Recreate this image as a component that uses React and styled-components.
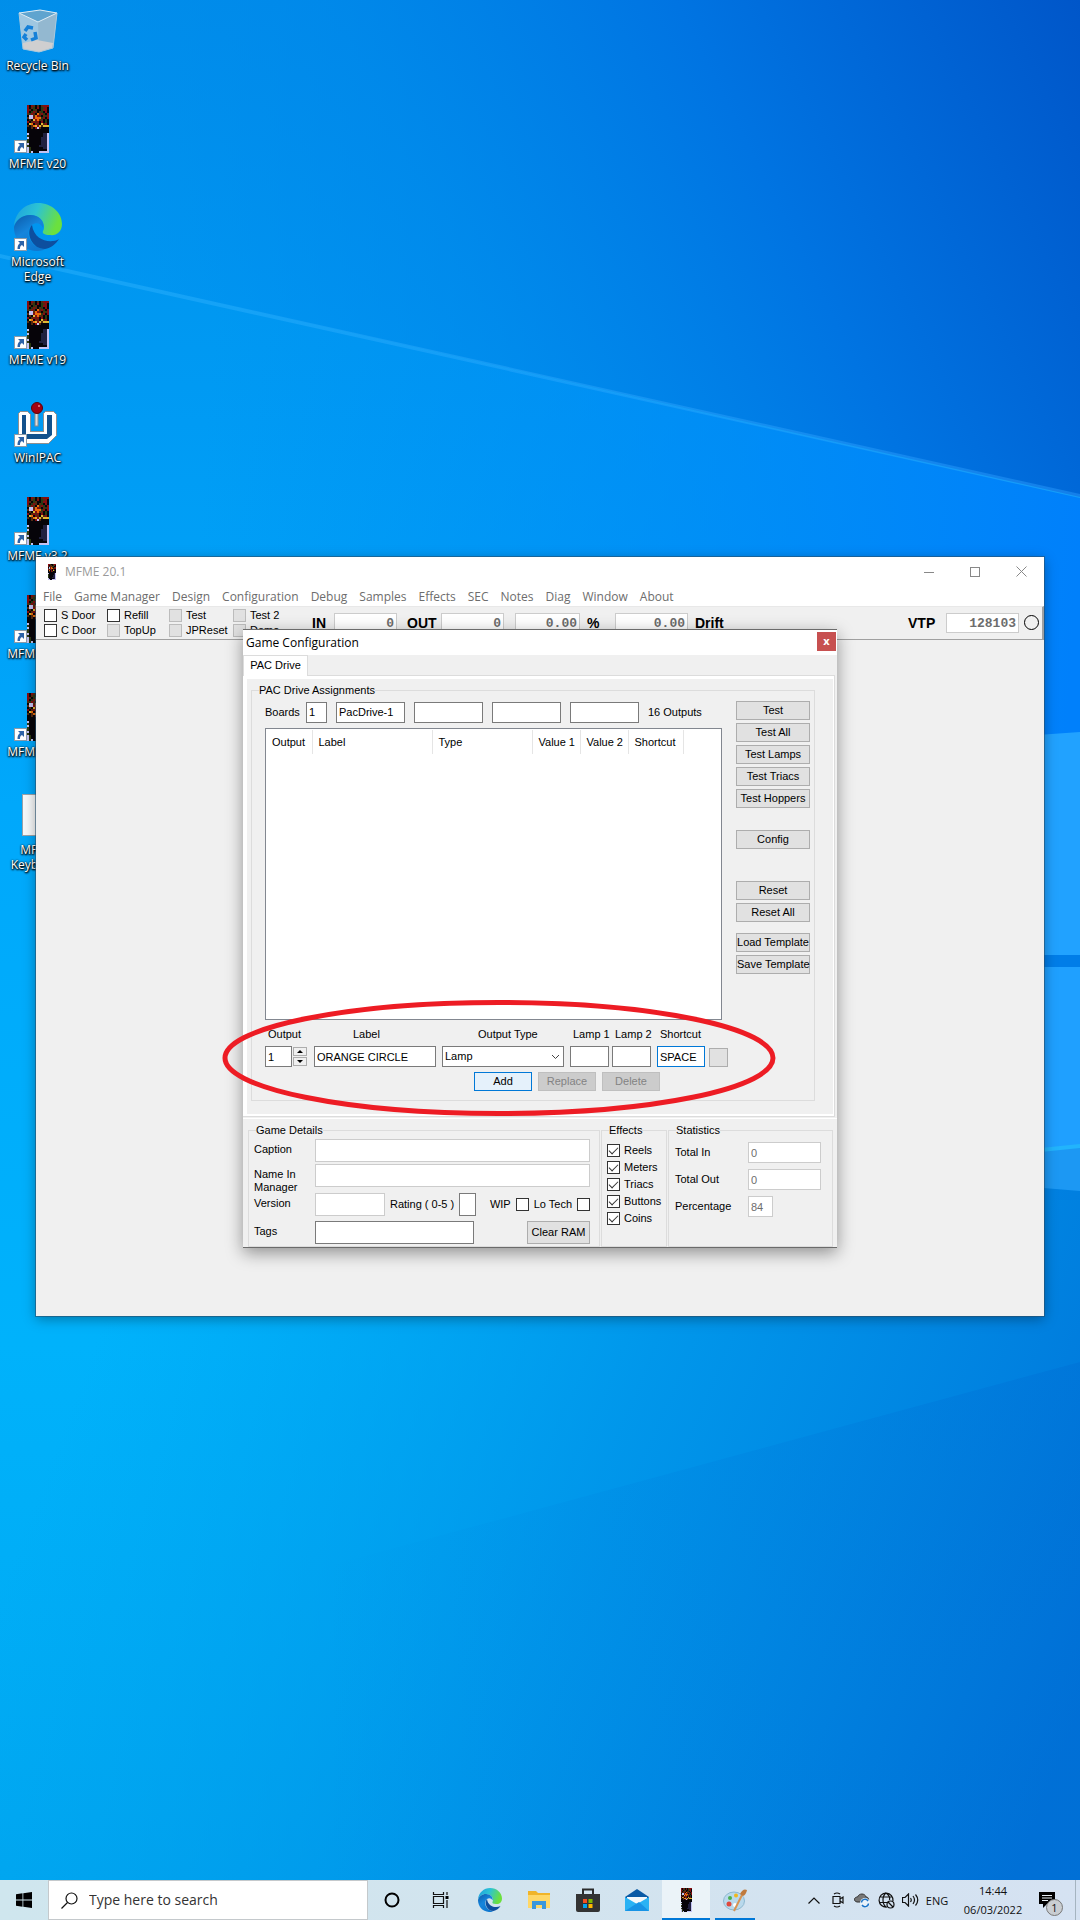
import React from 'react';
import styled, { createGlobalStyle, css } from 'styled-components';

const SHELL = '"Open Sans", "Noto Sans", sans-serif';
const CLASSIC = '"Liberation Sans", Arial, sans-serif';

const GlobalStyle = createGlobalStyle`
  *, *::before, *::after { box-sizing: border-box; }
  body { margin: 0; background: #0092ea; }
  button, input, select { font: inherit; color: inherit; margin: 0; border-radius: 0; }
`;

/* ---------- Desktop ---------- */

const Desktop = styled.main`
  position: relative;
  display: flex;
  flex-direction: column;
  min-height: 100vh;
  overflow: hidden;
  font: 12px/15px ${SHELL};
`;

const WallpaperArt = styled.svg`
  position: absolute;
  inset: 0;
  width: 100%;
  height: 100%;
`;

const IconColumn = styled.ul`
  position: relative;
  flex: 1;
  display: grid;
  grid-auto-rows: 98px;
  align-content: start;
  width: 75px;
  margin: 0;
  padding: 7px 0 0;
  list-style: none;
`;

const Shortcut = styled.a`
  display: flex;
  flex-direction: column;
  align-items: center;
  gap: 3px;
  color: #fff;
  text-align: center;
  text-decoration: none;
  text-shadow: 0 1px 2px #000, 1px 1px 2px #000, 0 0 2px rgba(0, 0, 0, 0.8);

  span { width: 68px; }
  svg { display: block; }
`;

/* ---------- Shared controls ---------- */

const PushButton = styled.button`
  width: ${(p) => p.$width || 74}px;
  height: ${(p) => p.$height || 19}px;
  padding: 0;
  border: 1px solid #adadad;
  background: #e1e1e1;
  line-height: 13px;
  white-space: nowrap;

  ${(p) => p.$primary && css`
    border-color: #0078d7;
    background: #e5f1fb;
  `}
  &:disabled {
    border-color: #bfbfbf;
    background: #cccccc;
    color: #838383;
  }
`;

const TextBox = styled.input`
  width: ${(p) => (p.$width ? `${p.$width}px` : '100%')};
  height: ${(p) => p.$height || 21}px;
  min-width: 0;
  padding: 0 2px;
  border: 1px solid ${(p) => (p.$active ? '#0078d7' : p.$soft ? '#cccccc' : '#7a7a7a')};
  background: #fff;
  color: ${(p) => (p.$dim ? '#6d6d6d' : '#000')};
  outline: none;
`;

const Tick = styled.input`
  appearance: none;
  flex: none;
  display: grid;
  place-items: center;
  width: 13px;
  height: 13px;
  border: 1px solid #333;
  background: #fff;

  &:disabled { border-color: #bcbcbc; background: #e1e1e1; }
  &:checked::before {
    content: '';
    width: 9px;
    height: 5px;
    margin-bottom: 3px;
    border: solid #333;
    border-width: 0 0 1px 1px;
    transform: rotate(-45deg);
  }
`;

const TickLabel = styled.label`
  display: flex;
  align-items: center;
  gap: 4px;
  height: 13px;
  white-space: nowrap;
`;

/* ---------- Main window ---------- */

const AppWindow = styled.section`
  position: absolute;
  top: 557px;
  left: 36px;
  right: 36px;
  height: 759px;
  background: #f0f0f0;
  box-shadow: 0 0 0 1px rgba(40, 80, 110, 0.6), 0 3px 12px rgba(0, 0, 0, 0.35);
`;

const AppTitle = styled.header`
  display: flex;
  align-items: center;
  height: 29px;
  padding-left: 12px;
  background: #fff;
  color: #999;

  h1 { flex: 1; margin: 0 0 0 9px; font-size: 12px; font-weight: 400; }
`;

const CaptionButton = styled.button`
  display: grid;
  place-items: center;
  width: 46px;
  height: 29px;
  padding: 0;
  border: 0;
  background: transparent;
`;

const MenuBar = styled.nav`
  display: flex;
  height: 20px;
  padding-left: 1px;
  background: #fff;
  color: #6d6d6d;

  a { padding: 0 6px; color: inherit; text-decoration: none; line-height: 22px; }
`;

const ToolBar = styled.div`
  display: flex;
  height: 34px;
  padding: 2px 1px 0 8px;
  border-top: 1px solid #e8e8e8;
  border-right: 2px solid #a0a0a0;
  border-bottom: 1px solid #a0a0a0;
  font: 11px/13px ${CLASSIC};
`;

const SwitchGrid = styled.div`
  display: grid;
  grid-template-columns: 63px 62px 64px 79px;
  grid-auto-rows: 13px;
  row-gap: 2px;
`;

const Meter = styled.label`
  display: flex;
  align-items: center;
  height: 28px;
  margin-left: ${(p) => p.$lead || 0}px;
  font: bold 14px/16px ${CLASSIC};

  span { width: ${(p) => p.$label || 0}px; }
`;

const Digits = styled.input`
  width: ${(p) => p.$width}px;
  height: 20px;
  padding: 1px 2px 0;
  border: 1px solid #ccc;
  background: #fff;
  color: #6d6d6d;
  font: bold 13px/16px "Liberation Mono", monospace;
  text-align: right;
`;

const StatusLamp = styled.span`
  align-self: center;
  width: 15px;
  height: 15px;
  margin: 0 2px 3px 5px;
  border: 1px solid #000;
  border-radius: 50%;
`;

const Spacer = styled.div`
  flex: 1;
`;

/* ---------- Configuration dialog ---------- */

const Dialog = styled.section`
  position: absolute;
  top: 72px;
  left: 207px;
  width: 594px;
  border: solid #6b6b6b;
  border-width: 1px 0;
  background: #f0f0f0;
  box-shadow: 0 5px 16px rgba(0, 0, 0, 0.4);
  color: #000;
  font: 11px/13px ${CLASSIC};
`;

const DialogTitle = styled.header`
  display: flex;
  align-items: center;
  justify-content: space-between;
  height: 25px;
  padding: 0 1px 0 3px;
  background: #fff;

  h2 { margin: 0; font: 400 12px/16px ${SHELL}; }
`;

const CloseButton = styled.button`
  width: 19px;
  height: 19px;
  margin-bottom: 2px;
  padding: 0 0 2px;
  border: 0;
  background: #c75050;
  color: #fff;
  font: bold 11px/13px ${SHELL};
`;

const TabStrip = styled.div`
  display: flex;
  height: 20px;
`;

const Tab = styled.button`
  position: relative;
  width: 65px;
  height: 21px;
  padding: 0 0 2px;
  border: solid #dcdcdc;
  border-width: 1px 1px 0;
  background: #fff;
  white-space: nowrap;
`;

const TabPanel = styled.div`
  margin-right: 2px;
  padding: 3px 1px 2px 4px;
  border: solid #dcdcdc;
  border-width: 1px 1px 1px 0;
  background: #fff;
`;

const TabBody = styled.div`
  padding: 5px 18px 13px 4px;
  background: #f0f0f0;
`;

const Group = styled.fieldset`
  min-width: 0;
  margin: 0;
  padding: 0;
  border: 1px solid #dcdcdc;

  legend { margin-left: 7px; padding: 0; line-height: 13px; }
`;

const DriveLayout = styled.div`
  display: grid;
  grid-template-columns: minmax(0, 1fr) 74px;
  column-gap: 14px;
  padding: 4px 4px 9px 13px;
`;

const BoardsRow = styled.div`
  display: grid;
  grid-template-columns: 32px 21px repeat(4, 69px) 1fr;
  align-items: center;
  column-gap: 9px;
  height: 22px;
  white-space: nowrap;
`;

const ListBox = styled.div`
  height: 292px;
  margin-top: 5px;
  padding-top: 1px;
  border: 1px solid #828790;
  background: #fff;
`;

const ListTable = styled.table`
  table-layout: fixed;
  width: 417px;
  border-collapse: collapse;

  th {
    height: 24px;
    padding: 0 0 0 6px;
    border-right: 1px solid #e5e5e5;
    font-weight: 400;
    text-align: left;
    white-space: nowrap;
  }
`;

const EntryRow = styled.div`
  display: flex;
  align-items: flex-end;
  gap: 6px;
  margin-top: 8px;
`;

const EntryPair = styled.div`
  flex: none;
  display: flex;
  align-items: flex-end;
  gap: ${(p) => p.$gap || 3}px;
`;

const Entry = styled.div`
  flex: none;
  width: ${(p) => p.$width}px;

  > label {
    display: block;
    margin-bottom: 5px;
    padding-left: ${(p) => p.$indent || 3}px;
    white-space: nowrap;
  }
`;

const Spin = styled.div`
  display: flex;
  gap: 1px;
`;

const SpinArrows = styled.div`
  display: grid;
  grid-template-rows: 9px 9px;
  gap: 1px;
  padding-top: 1px;

  button {
    display: grid;
    place-items: center;
    width: 14px;
    padding: 0;
    border: 1px solid #adadad;
    background: #f0f0f0;
  }
`;

const SelectWrap = styled.div`
  display: grid;
  align-items: center;

  > * { grid-area: 1 / 1; }
  svg { justify-self: end; margin-right: 4px; pointer-events: none; }
`;

const DropDown = styled.select`
  appearance: none;
  width: 100%;
  height: 21px;
  padding: 0 2px;
  border: 1px solid #7a7a7a;
  background: #fff;
`;

const ActionRow = styled.div`
  display: flex;
  gap: 6px;
  margin-top: 5px;
  padding-left: 209px;
`;

const ButtonStack = styled.div`
  display: flex;
  flex-direction: column;
  gap: 3px;
  margin-bottom: ${(p) => p.$after || 0}px;
`;

const BottomRow = styled.div`
  display: grid;
  grid-template-columns: 352px 66px 165px;
  column-gap: 1px;
  margin-top: 1px;
  padding: 5px 3px 0 5px;
  border-top: 1px solid #fff;
`;

const Details = styled.div`
  padding: 2px 9px 2px 5px;
`;

const DetailRow = styled.div`
  display: flex;
  height: 23px;
  margin-bottom: ${(p) => p.$after || 0}px;
`;

const DetailLabel = styled.label`
  flex: none;
  width: 61px;
  padding-top: 4px;
`;

const Inline = styled.div`
  display: flex;
  align-items: center;
  gap: 5px;
  white-space: nowrap;
`;

const EffectList = styled.div`
  display: grid;
  gap: 4px;
  padding: 7px 0 0 5px;
`;

const Stats = styled.div`
  display: grid;
  grid-template-columns: 73px 1fr;
  align-items: center;
  row-gap: 6px;
  padding: 5px 11px 0 6px;
`;

const Highlight = styled.svg`
  position: absolute;
  top: 369px;
  left: -21px;
  width: 554px;
  height: 118px;
  pointer-events: none;
`;

/* ---------- Taskbar ---------- */

const TaskBar = styled.footer`
  position: relative;
  display: flex;
  align-items: stretch;
  height: 40px;
  background: linear-gradient(90deg, #cfe6ee, #d2e4ee 45%, #d5e2f2);
  color: #111;
`;

const TaskButton = styled.button`
  display: grid;
  place-items: center;
  width: ${(p) => p.$width || 49}px;
  margin-left: ${(p) => p.$lead || 0}px;
  padding: 0;
  border: 0;
  background: ${(p) => (p.$current ? '#ebf3f8' : 'transparent')};
  box-shadow: ${(p) => (p.$running ? 'inset 0 -2px #0078d7' : 'none')};
`;

const SearchBox = styled.label`
  display: flex;
  align-items: center;
  gap: 11px;
  width: 320px;
  padding: 0 12px;
  border: 1px solid #c4c9cc;
  background: #fff;

  input {
    flex: 1;
    min-width: 0;
    padding: 0;
    border: 0;
    background: none;
    outline: none;
    font-size: 14px;
    line-height: 20px;
  }
  input::placeholder { color: #333; opacity: 1; }
`;

const Tray = styled.div`
  display: flex;
  align-items: center;
  margin-left: auto;
`;

const TrayButton = styled(TaskButton)`
  width: 24px;
  height: 40px;
`;

const Language = styled.span`
  width: 30px;
  text-align: center;
  font-size: 11px;
`;

const Clock = styled.time`
  display: grid;
  width: 82px;
  text-align: center;
  font-size: 11px;
  line-height: 19px;
`;

const ActionCentre = styled.button`
  display: grid;
  align-items: center;
  width: 42px;
  height: 40px;
  padding: 0 0 0 5px;
  border: 0;
  border-right: 1px solid #a5b4c0;
  margin-right: 4px;
  background: transparent;
`;

const NoticeIcon = styled.span`
  position: relative;
  display: block;
  svg { display: block; }
`;

const Badge = styled.span`
  position: absolute;
  top: 7px;
  left: 7px;
  width: 17px;
  height: 17px;
  border: 1px solid #777;
  border-radius: 50%;
  background: #c9cdd1;
  font-size: 11px;
  line-height: 15px;
  text-align: center;
`;

/* ---------- Drawings ---------- */

function Wallpaper() {
  return (
    <WallpaperArt viewBox="0 0 1080 1920" preserveAspectRatio="none" aria-hidden="true">
      <defs>
        <linearGradient id="wpBase" x1="0" y1="0" x2="0" y2="1">
          <stop offset="0" stopColor="#008fe9" />
          <stop offset="0.22" stopColor="#009bf4" />
          <stop offset="0.42" stopColor="#00a8fb" />
          <stop offset="0.7" stopColor="#00b2fb" />
          <stop offset="1" stopColor="#00a7f0" />
        </linearGradient>
        <linearGradient id="wpTop" gradientUnits="userSpaceOnUse" x1="150" y1="460" x2="1080" y2="0">
          <stop offset="0" stopColor="#008cf0" stopOpacity="0" />
          <stop offset="0.35" stopColor="#0086ea" stopOpacity="0.7" />
          <stop offset="0.65" stopColor="#0074e2" />
          <stop offset="1" stopColor="#0056c9" />
        </linearGradient>
        <linearGradient id="wpMid" gradientUnits="userSpaceOnUse" x1="200" y1="500" x2="1080" y2="560">
          <stop offset="0" stopColor="#0088f0" stopOpacity="0" />
          <stop offset="1" stopColor="#0080fb" />
        </linearGradient>
        <linearGradient id="wpLow" gradientUnits="userSpaceOnUse" x1="80" y1="1380" x2="1060" y2="1760">
          <stop offset="0" stopColor="#009fec" stopOpacity="0" />
          <stop offset="0.5" stopColor="#0092e8" stopOpacity="0.85" />
          <stop offset="1" stopColor="#0074d9" />
        </linearGradient>
        <linearGradient id="wpFacet">
          <stop offset="0.3" stopColor="#0066d0" stopOpacity="0" />
          <stop offset="1" stopColor="#0060cc" stopOpacity="0.22" />
        </linearGradient>
        <linearGradient id="wpRay">
          <stop offset="0" stopColor="#35b8ff" stopOpacity="0.4" />
          <stop offset="1" stopColor="#2c9cff" stopOpacity="0.45" />
        </linearGradient>
      </defs>
      <rect width="1080" height="1920" fill="url(#wpBase)" />
      <path d="M0 255 L1080 498 V1200 H0 Z" fill="url(#wpMid)" />
      <path d="M0 0 H1080 V497 L0 254 Z" fill="url(#wpTop)" />
      <path d="M0 254 L1080 494 V498 L0 258 Z" fill="url(#wpRay)" />
      <path d="M0 1180 H1080 V1920 H0 Z" fill="url(#wpLow)" />
      <path d="M1080 1362 L0 1655 V1920 H1080 Z" fill="url(#wpFacet)" />
      <path d="M900 745 L1080 732 V955 H900 Z" fill="#21a2ff" />
      <path d="M900 967 H1080 V1145 L900 1163 Z" fill="#1fa0ff" />
      <path d="M900 955 H1080 V967 H900 Z" fill="#007de8" />
      <path d="M900 1163 L1080 1145 V1191 L900 1176 Z" fill="#1c98f3" />
      <path d="M900 1162 L1080 1144 V1148 L900 1166 Z" fill="#22b4fc" />
    </WallpaperArt>
  );
}

const CABINET = [
  'rkrbkbkbrrr',
  'rkbgkrkgbrk',
  'rbkgbkkgrrk',
  'rkgrbkbgkrk',
  'bgrbkobrgkr',
  'kwwborbkbgr',
  'bwwrooogrkr',
  'kbkyrobbkgk',
  'rkbrbrkrkgk',
  'kyokrbkybrk',
  'bkboyrybyyy',
  'kkbkrwbkkkk',
  'kkkkkkkkkkk',
  'kkkkkkkkkkk',
  'wkkkkkkknnw',
  'gkkkkkkknnw',
  'wkkkkkknnnw',
  'gkkkkkknnnw',
  'gkkkkkknnnw',
  'wkkkkkknnnw',
  'gkkkkknnnnw',
  'wgkkkkkknnw',
  'wgkkkkkkkkw',
  'wgwkkkwwwww',
];
const INK = {
  k: '#060409', r: '#860c10', o: '#ea6a0c', y: '#dcb832', b: '#552a10',
  g: '#2c3a12', w: '#c4c2f2', n: '#20203f',
};

function Cabinet({ x, width, height }) {
  return (
    <svg x={x} width={width} height={height} viewBox="0 0 11 24" preserveAspectRatio="none" shapeRendering="crispEdges" aria-hidden="true">
      {CABINET.flatMap((line, row) => [...line].map((c, col) => (
        <rect key={`${col}-${row}`} x={col} y={row} width="1" height="1" fill={INK[c]} />
      )))}
    </svg>
  );
}

function LinkArrow() {
  return (
    <g>
      <rect x="0.5" y="35.5" width="12" height="12" fill="#fff" stroke="#8c9aa8" />
      <path d="M4 38 H10 V44 L8 42 C6 43 6 44 6 46 H3.500 C3.500 43 4 41.500 6 40 Z" fill="#2d63a8" />
    </g>
  );
}

function CabinetShortcut() {
  return (
    <svg width="48" height="48" viewBox="0 0 48 48" aria-hidden="true">
      <Cabinet x={13} width={22} height={48} />
      <LinkArrow />
    </svg>
  );
}

function RecycleBin() {
  return (
    <svg width="48" height="48" viewBox="0 0 48 48" aria-hidden="true">
      <path d="M5 6 L26 3 L43 6 L39 41 L25 45 L9 42 Z" fill="#b0cde0" opacity="0.9" />
      <path d="M5 6 L26 3 L43 6 L24 15 Z" fill="#5fa4cf" />
      <path d="M24 15 L43 6 L39 41 L25 45 Z" fill="#93b8d0" />
      <path d="M9 36 L23 33 L39 36 L38 41 L25 45 L9 42 Z" fill="#cfcfd0" />
      <path d="M5 6 L26 3 L43 6 L24 15 Z" fill="none" stroke="#dcebf4" strokeWidth="1" />
      <path d="M5 6 L9 42 L25 45 L39 41 L43 6" fill="none" stroke="#a8c8dc" strokeWidth="1" />
      <g fill="none" stroke="#1580d8" strokeWidth="3.500">
        <path d="M11 24 L14 20 L19 21" />
        <path d="M21 25 L22 31 L17 33" />
        <path d="M13 33 L10 30 L12 27" />
      </g>
    </svg>
  );
}

function EdgeArt({ id }) {
  return (
    <>
      <defs>
        <linearGradient id={`${id}a`} x1="0" y1="0" x2="1" y2="0.3">
          <stop offset="0" stopColor="#1c9ee0" />
          <stop offset="0.5" stopColor="#2cc3d4" />
          <stop offset="1" stopColor="#6be03e" />
        </linearGradient>
        <linearGradient id={`${id}b`} x1="0" y1="0" x2="0.6" y2="1">
          <stop offset="0" stopColor="#0c5aa8" />
          <stop offset="0.5" stopColor="#1585dc" />
          <stop offset="1" stopColor="#0f78d0" />
        </linearGradient>
      </defs>
      <path d="M0 23 C1 9 12 0 24 0 C38 0 48 10 48 21 C48 29 42 33 36 32 C30 32 28 30 29 28 C32 24 29 12 16 12 C8 12 2 17 0 23 Z" fill={`url(#${id}a)`} />
      <path d="M0 24 C2 17 8 12 16 12 C25 12 31 18 29 25 C27 20 22 19 18 22 C10 29 16 45 31 46 C28 48 24 48 22 48 C9 47 0 37 0 24 Z" fill={`url(#${id}b)`} />
      <path d="M18 22 C11 30 18 46 31 46 C37 45 42 41 45 36 C37 41 20 38 18 22 Z" fill="#0d4f9f" />
    </>
  );
}

function EdgeShortcut() {
  return (
    <svg width="48" height="48" viewBox="0 0 48 48" aria-hidden="true">
      <EdgeArt id="deskEdge" />
      <LinkArrow />
    </svg>
  );
}

function WinIpac() {
  return (
    <svg width="48" height="48" viewBox="0 0 48 48" aria-hidden="true">
      <path d="M4 15 L7 12 H13 L16 15 V32 H29 V15 L32 12 H39 L42 15 V37 L35 44 H4 Z" fill="#fff" stroke="#8f8f8f" strokeWidth="1" shapeRendering="crispEdges" />
      <path d="M8 16 H12 V35 H33 V16 H38 V36 L33 40 H8 Z" fill="#12518c" />
      <rect x="21" y="13" width="3" height="14" fill="#ddd" stroke="#888" />
      <circle cx="23" cy="9" r="5.500" fill="#a30010" stroke="#5a0008" />
      <rect x="24" y="6" width="2" height="2" fill="#e0606a" />
      <LinkArrow />
    </svg>
  );
}

function BlankFile() {
  return (
    <svg width="48" height="48" viewBox="0 0 48 48" aria-hidden="true">
      <rect x="8.500" y="3.500" width="31" height="41" fill="#f6f8f9" stroke="#9aa2a8" />
    </svg>
  );
}

const glyph = { fill: 'none', stroke: '#111', strokeWidth: 1.2 };

/* ---------- Data ---------- */

const shortcuts = [
  ['Recycle Bin', RecycleBin],
  ['MFME v20', CabinetShortcut],
  ['Microsoft Edge', EdgeShortcut],
  ['MFME v19', CabinetShortcut],
  ['WinIPAC', WinIpac],
  ['MFME v3.2', CabinetShortcut],
  ['MFME v5.1', CabinetShortcut],
  ['MFME v6.1', CabinetShortcut],
  ['MFME Keyboard', BlankFile],
];

const menus = ['File', 'Game Manager', 'Design', 'Configuration', 'Debug', 'Samples', 'Effects', 'SEC', 'Notes', 'Diag', 'Window', 'About'];

const switches = [
  ['S Door', true], ['Refill', true], ['Test', false], ['Test 2', false],
  ['C Door', true], ['TopUp', false], ['JPReset', false], ['Demo', false],
];

const columns = [['Output', 46], ['Label', 120], ['Type', 100], ['Value 1', 48], ['Value 2', 48], ['Shortcut', 55]];

const buttonGroups = [
  { after: 22, names: ['Test', 'Test All', 'Test Lamps', 'Test Triacs', 'Test Hoppers'] },
  { after: 32, names: ['Config'] },
  { after: 11, names: ['Reset', 'Reset All'] },
  { after: 0, names: ['Load Template', 'Save Template'] },
];

/* ---------- Views ---------- */

function Toolbar() {
  return (
    <ToolBar>
      <SwitchGrid>
        {switches.map(([name, enabled]) => (
          <TickLabel key={name}><Tick type="checkbox" disabled={!enabled} />{name}</TickLabel>
        ))}
      </SwitchGrid>
      <Meter $label={22}><span>IN</span><Digits $width={63} defaultValue="0" readOnly /></Meter>
      <Meter $lead={10} $label={34}><span>OUT</span><Digits $width={63} defaultValue="0" readOnly /></Meter>
      <Meter $lead={11}><Digits $width={65} defaultValue="0.00" aria-label="Percent" readOnly /></Meter>
      <Meter $lead={7} $label={28}><span>%</span><Digits $width={73} defaultValue="0.00" aria-label="Drift" readOnly /></Meter>
      <Meter $lead={7}>Drift</Meter>
      <Spacer />
      <Meter $label={38}><span>VTP</span><Digits $width={73} defaultValue="128103" readOnly /></Meter>
      <StatusLamp />
    </ToolBar>
  );
}

function DriveTab() {
  return (
    <Group>
      <legend>PAC Drive Assignments</legend>
      <DriveLayout>
        <div>
          <BoardsRow>
            <label htmlFor="boards">Boards</label>
            <TextBox id="boards" defaultValue="1" />
            <TextBox aria-label="Board 1" defaultValue="PacDrive-1" />
            <TextBox aria-label="Board 2" />
            <TextBox aria-label="Board 3" />
            <TextBox aria-label="Board 4" />
            <span>16 Outputs</span>
          </BoardsRow>
          <ListBox>
            <ListTable>
              <colgroup>{columns.map(([name, width]) => <col key={name} width={width} />)}</colgroup>
              <thead><tr>{columns.map(([name]) => <th key={name} scope="col">{name}</th>)}</tr></thead>
            </ListTable>
          </ListBox>
          <EntryRow>
            <Entry $width={43}>
              <label htmlFor="output">Output</label>
              <Spin>
                <TextBox id="output" $width={27} defaultValue="1" />
                <SpinArrows>
                  <button type="button" aria-label="Increase"><svg width="6" height="3"><path d="M0 3 L3 0 L6 3 Z" /></svg></button>
                  <button type="button" aria-label="Decrease"><svg width="6" height="3"><path d="M0 0 L3 3 L6 0 Z" /></svg></button>
                </SpinArrows>
              </Spin>
            </Entry>
            <Entry $width={122} $indent={39}>
              <label htmlFor="label">Label</label>
              <TextBox id="label" defaultValue="ORANGE CIRCLE" />
            </Entry>
            <Entry $width={122} $indent={36}>
              <label htmlFor="type">Output Type</label>
              <SelectWrap>
                <DropDown id="type" defaultValue="Lamp"><option>Lamp</option></DropDown>
                <svg width="9" height="6"><path d="M1 1 L4.500 4.500 L8 1" fill="none" stroke="#444" /></svg>
              </SelectWrap>
            </Entry>
            <EntryPair>
              <Entry $width={39}><label htmlFor="lamp1">Lamp 1</label><TextBox id="lamp1" /></Entry>
              <Entry $width={39}><label htmlFor="lamp2">Lamp 2</label><TextBox id="lamp2" /></Entry>
            </EntryPair>
            <EntryPair $gap={4}>
              <Entry $width={48}><label htmlFor="key">Shortcut</label><TextBox id="key" $active defaultValue="SPACE" /></Entry>
              <PushButton $width={19} aria-label="Clear shortcut" />
            </EntryPair>
          </EntryRow>
          <ActionRow>
            <PushButton $width={58} $primary>Add</PushButton>
            <PushButton $width={58} disabled>Replace</PushButton>
            <PushButton $width={58} disabled>Delete</PushButton>
          </ActionRow>
        </div>
        <div>
          {buttonGroups.map((group) => (
            <ButtonStack key={group.names[0]} $after={group.after}>
              {group.names.map((name) => <PushButton key={name}>{name}</PushButton>)}
            </ButtonStack>
          ))}
        </div>
      </DriveLayout>
    </Group>
  );
}

function ConfigDialog() {
  return (
    <Dialog role="dialog" aria-label="Game Configuration">
      <DialogTitle>
        <h2>Game Configuration</h2>
        <CloseButton aria-label="Close">x</CloseButton>
      </DialogTitle>
      <TabStrip role="tablist"><Tab role="tab" aria-selected="true">PAC Drive</Tab></TabStrip>
      <TabPanel><TabBody><DriveTab /></TabBody></TabPanel>
      <BottomRow>
        <Group>
          <legend>Game Details</legend>
          <Details>
            <DetailRow $after={2}>
              <DetailLabel htmlFor="caption">Caption</DetailLabel>
              <TextBox id="caption" $soft $height={23} />
            </DetailRow>
            <DetailRow $after={6}>
              <DetailLabel htmlFor="manager">Name In Manager</DetailLabel>
              <TextBox id="manager" $soft $height={23} />
            </DetailRow>
            <DetailRow $after={5}>
              <DetailLabel htmlFor="version">Version</DetailLabel>
              <Inline>
                <TextBox id="version" $soft $width={70} $height={23} />
                <label htmlFor="rating">Rating ( 0-5 )</label>
                <TextBox id="rating" $width={17} $height={23} />
              </Inline>
              <Spacer />
              <Inline>
                <label htmlFor="wip">WIP</label><Tick id="wip" type="checkbox" />
                <label htmlFor="lotech">Lo Tech</label><Tick id="lotech" type="checkbox" />
              </Inline>
            </DetailRow>
            <DetailRow>
              <DetailLabel htmlFor="tags">Tags</DetailLabel>
              <TextBox id="tags" $width={159} $height={23} />
              <Spacer />
              <PushButton $width={63} $height={23}>Clear RAM</PushButton>
            </DetailRow>
          </Details>
        </Group>
        <Group>
          <legend>Effects</legend>
          <EffectList>
            {['Reels', 'Meters', 'Triacs', 'Buttons', 'Coins'].map((name) => (
              <TickLabel key={name}><Tick type="checkbox" defaultChecked />{name}</TickLabel>
            ))}
          </EffectList>
        </Group>
        <Group>
          <legend>Statistics</legend>
          <Stats>
            <label htmlFor="totalIn">Total In</label>
            <TextBox id="totalIn" $soft $dim defaultValue="0" />
            <label htmlFor="totalOut">Total Out</label>
            <TextBox id="totalOut" $soft $dim defaultValue="0" />
            <label htmlFor="percentage">Percentage</label>
            <TextBox id="percentage" $soft $dim $width={25} defaultValue="84" />
          </Stats>
        </Group>
      </BottomRow>
      <Highlight viewBox="0 0 554 118" aria-hidden="true">
        <ellipse cx="277" cy="59" rx="274" ry="55.5" fill="none" stroke="#ed1c24" strokeWidth="5" />
      </Highlight>
    </Dialog>
  );
}

function Taskbar() {
  return (
    <TaskBar>
      <TaskButton $width={48} aria-label="Start">
        <svg width="16" height="16" viewBox="0 0 16 16"><path d="M0 2.200 L6.500 1.300 V7.600 H0 Z M7.300 1.200 L16 0 V7.600 H7.300 Z M0 8.400 H6.500 V14.700 L0 13.800 Z M7.300 8.400 H16 V16 L7.300 14.800 Z" fill="#000" /></svg>
      </TaskButton>
      <SearchBox>
        <svg width="17" height="17" viewBox="0 0 17 17"><circle cx="10.500" cy="6.500" r="5.500" {...glyph} /><path d="M6.500 10.500 L0.500 16.500" {...glyph} /></svg>
        <input type="search" aria-label="Search" placeholder="Type here to search" />
      </SearchBox>
      <TaskButton $width={48} aria-label="Cortana">
        <svg width="16" height="16"><circle cx="8" cy="8" r="6.500" fill="none" stroke="#000" strokeWidth="2" /></svg>
      </TaskButton>
      <TaskButton aria-label="Task View">
        <svg width="17" height="16" viewBox="0 0 17 16">
          <path d="M1.500 4.500 H11.500 V11.500 H1.500 Z M1.500 0 V2.500 H11.500 V0 M1.500 16 V13.500 H11.500 V16 M15 0 V3 M15 8 V16" {...glyph} />
          <rect x="13.500" y="4" width="3" height="3" />
        </svg>
      </TaskButton>
      <TaskButton $width={50} aria-label="Microsoft Edge"><svg width="24" height="24" viewBox="0 0 48 48"><EdgeArt id="barEdge" /></svg></TaskButton>
      <TaskButton $width={48} aria-label="File Explorer">
        <svg width="22" height="20" viewBox="0 0 22 20">
          <path d="M0 1 H8 L10 3 H22 V18 H0 Z" fill="#f0b429" />
          <path d="M0 5 H22 V18 H0 Z" fill="#ffd766" />
          <path d="M4 19 V11 H18 V19 H14 V15 H8 V19 Z" fill="#3a97dc" />
        </svg>
      </TaskButton>
      <TaskButton aria-label="Microsoft Store">
        <svg width="24" height="24" viewBox="0 0 24 24">
          <path d="M7 6 V1.500 H17 V6" fill="none" stroke="#2b2b2b" strokeWidth="2" />
          <path d="M0 6 H24 V22 Q24 24 22 24 H2 Q0 24 0 22 Z" fill="#333" />
          <rect x="7" y="11" width="4" height="4" fill="#f25022" /><rect x="12.500" y="11" width="4" height="4" fill="#7fba00" />
          <rect x="7" y="16" width="4" height="4" fill="#00a4ef" /><rect x="12.500" y="16" width="4" height="4" fill="#ffb900" />
        </svg>
      </TaskButton>
      <TaskButton $width={50} aria-label="Mail">
        <svg width="24" height="22" viewBox="0 0 24 22">
          <path d="M0 8 L12 0 L24 8 V12 H0 Z" fill="#0b5aa5" />
          <path d="M2 8 H22 V14 H2 Z" fill="#f5f8fa" />
          <path d="M0 8 L12 15 L24 8 V22 H0 Z" fill="#2ab2f4" />
          <path d="M0 22 L14 13 L24 22 Z" fill="#1793e6" />
        </svg>
      </TaskButton>
      <TaskButton $width={48} $running $current aria-label="MFME"><Cabinet width={11} height={24} /></TaskButton>
      <TaskButton $width={40} $lead={5} $running aria-label="Paint">
        <svg width="24" height="24" viewBox="0 0 24 24">
          <ellipse cx="11" cy="13" rx="10.500" ry="9" fill="#b9d9ec" stroke="#8db8d0" />
          <circle cx="6" cy="16" r="2.500" fill="#e0493e" /><circle cx="7" cy="10" r="2" fill="#4bb04f" />
          <circle cx="13" cy="7.500" r="2" fill="#f1b71c" /><circle cx="12" cy="17" r="2" fill="#fff" />
          <path d="M11 23 L19 7" stroke="#d79352" strokeWidth="2" />
          <path d="M17 6 Q20 0 24 2 Q23 7 20 8 Z" fill="#c07a3d" />
        </svg>
      </TaskButton>
      <Tray>
        <TrayButton aria-label="Show hidden icons"><svg width="12" height="7"><path d="M0.500 6.500 L6 1 L11.500 6.500" {...glyph} /></svg></TrayButton>
        <TrayButton aria-label="Meet Now">
          <svg width="12" height="16" viewBox="0 0 12 16"><path d="M1 4.500 H8 V11.500 H1 Z M8 7 L11 5 V11 L8 9 M2 2 Q5 0 8 2 M2 14 Q5 16 8 14" {...glyph} /></svg>
        </TrayButton>
        <TrayButton aria-label="OneDrive">
          <svg width="16" height="15" viewBox="0 0 16 15">
            <path d="M3 9 C-1 8 0 4 3.500 4 C5 0 11 0 12 4 C15 4 15 7 14 9 Z" fill="#777" stroke="#333" />
            <circle cx="11" cy="10" r="5" fill="#eaf3fb" />
            <path d="M7.500 9.500 A3.500 3.500 0 0 1 14 8 M14.500 10.500 A3.500 3.500 0 0 1 8 12" fill="none" stroke="#1c74c8" strokeWidth="1.500" />
          </svg>
        </TrayButton>
        <TrayButton aria-label="Network">
          <svg width="17" height="17" viewBox="0 0 17 17">
            <path d="M9 15 A7 7 0 1 1 15 9 M8 1 C4 4 4 12 8 15 M8 1 C11 3 12 6 11.500 8 M1.500 5 H14.500 M1 10.500 H9" {...glyph} />
            <circle cx="12.500" cy="12.500" r="3.500" {...glyph} /><path d="M10 10 L15 15" {...glyph} />
          </svg>
        </TrayButton>
        <TrayButton aria-label="Volume">
          <svg width="17" height="14" viewBox="0 0 17 14"><path d="M0.500 4.500 H3 L6.500 1 V13 L3 9.500 H0.500 Z M8.500 5 Q10 7 8.500 9 M11 3 Q14 7 11 11 M13.500 1.500 Q18 7 13.500 12.500" {...glyph} /></svg>
        </TrayButton>
        <Language>ENG</Language>
        <Clock dateTime="2022-03-06T14:44"><span>14:44</span><span>06/03/2022</span></Clock>
        <ActionCentre aria-label="Notifications">
          <NoticeIcon>
            <svg width="24" height="16" viewBox="0 0 24 16"><path d="M0 0 H16 V12 H8 L4 16 V12 H0 Z" fill="#000" /><path d="M3 3.500 H13 M3 6 H13 M3 8.500 H9" stroke="#e6eef5" /></svg>
            <Badge>1</Badge>
          </NoticeIcon>
        </ActionCentre>
      </Tray>
    </TaskBar>
  );
}

export default function App() {
  return (
    <>
      <GlobalStyle />
      <Desktop>
        <Wallpaper />
        <IconColumn>
          {shortcuts.map(([name, Art]) => (
            <li key={name}><Shortcut href="#"><Art /><span>{name}</span></Shortcut></li>
          ))}
        </IconColumn>
        <AppWindow>
          <AppTitle>
            <Cabinet width={8} height={16} />
            <h1>MFME 20.1</h1>
            <CaptionButton aria-label="Minimize"><svg width="10" height="10"><path d="M0 5.500 H10" stroke="#888" /></svg></CaptionButton>
            <CaptionButton aria-label="Maximize"><svg width="10" height="10"><rect x="0.500" y="0.500" width="9" height="9" fill="none" stroke="#888" /></svg></CaptionButton>
            <CaptionButton aria-label="Close"><svg width="11" height="11"><path d="M0.500 0.500 L10.500 10.500 M10.500 0.500 L0.500 10.500" stroke="#888" /></svg></CaptionButton>
          </AppTitle>
          <MenuBar>{menus.map((name) => <a key={name} href="#">{name}</a>)}</MenuBar>
          <Toolbar />
          <ConfigDialog />
        </AppWindow>
        <Taskbar />
      </Desktop>
    </>
  );
}
